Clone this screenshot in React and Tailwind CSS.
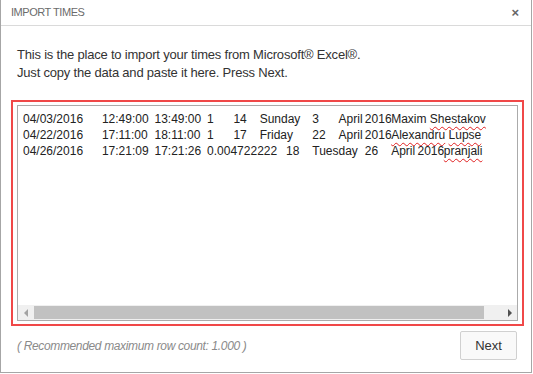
// cells: [text, width in tab stops]
const rows = [
  [['04/03/2016', 3], ['12:49:00', 2], ['13:49:00', 2], ['1', 1], ['14', 1], ['Sunday', 2], ['3', 1], ['April', 1], ['2016', 1], ['Maxim ', 0], ['Shestakov', -1]],
  [['04/22/2016', 3], ['17:11:00', 2], ['18:11:00', 2], ['1', 1], ['17', 1], ['Friday', 2], ['22', 1], ['April', 1], ['2016', 1], ['Alexandru', -1], [' ', 0], ['Lupse', -1]],
  [['04/26/2016', 3], ['17:21:09', 2], ['17:21:26', 2], ['0.004722222', 3], ['18', 1], ['Tuesday', 2], ['26', 1], ['April', 1], ['2016', 1], ['pranjali', -1]],
]

const widths = {
  1: 'inline-block w-[26.3px]',
  2: 'inline-block w-[52.6px]',
  3: 'inline-block w-[78.9px]',
}

function Cell({ text, w }) {
  if (w === -1) {
    return (
      <span className="underline decoration-wavy decoration-[#e02020] decoration-1 underline-offset-[3px]">
        {text}
      </span>
    )
  }
  if (w === 0) return <span>{text}</span>
  return <span className={widths[w]}>{text}</span>
}

export default function App() {
  return (
    <div className="w-[532px] h-[373px] bg-white border-x border-b border-[#a6a6a6] flex flex-col font-['Liberation_Sans',Arial,sans-serif]">
      <header className="h-[26px] shrink-0 border-b border-[#dadada] flex items-center justify-between pl-[10px] pr-[12px]">
        <span className="text-[11px] text-[#6b6b6b] tracking-[-0.45px]">IMPORT TIMES</span>
        <span className="text-[13px] font-bold text-[#666] leading-none">×</span>
      </header>

      <div className="pl-[16px] pt-[20px] text-[13px] leading-[18px] text-[#333] tracking-[-0.2px]">
        <p>This is the place to import your times from Microsoft® Excel®.</p>
        <p>Just copy the data and paste it here. Press Next.</p>
      </div>

      <div className="mt-[18px] ml-[10px] w-[513px] h-[226px] border-2 border-[#f04848] px-[4px] py-[3px]">
        <div className="h-full border border-[#ababab] flex flex-col">
          <div className="flex-1 pl-[5px] pt-[5px] whitespace-pre text-[12px] leading-[16px] text-[#222] overflow-hidden">
            {rows.map((r, i) => (
              <div key={i}>
                {r.map(([t, w], j) => (
                  <Cell key={j} text={t} w={w} />
                ))}
              </div>
            ))}
          </div>
          <div className="h-[15px] shrink-0 bg-[#f0f0f0] flex items-center">
            <div className="w-[15px] h-full flex items-center justify-center">
              <span className="w-0 h-0 border-y-[4px] border-y-transparent border-r-[4px] border-r-[#a3a3a3]" />
            </div>
            <div className="flex-1 h-full flex items-center pl-[1px] pr-[18px]">
              <div className="h-[13px] w-full bg-[#c1c1c1]" />
            </div>
            <div className="w-[15px] h-full flex items-center justify-center">
              <span className="w-0 h-0 border-y-[4px] border-y-transparent border-l-[4px] border-l-[#505050]" />
            </div>
          </div>
        </div>
      </div>

      <footer className="mt-[5px] flex items-center justify-between pl-[16px] pr-[14px]">
        <span className="text-[12px] italic text-[#8a8a8a] tracking-[-0.35px]">( Recommended maximum row count: 1.000 )</span>
        <button className="w-[57px] h-[29px] border border-[#d0d0d0] rounded-[2px] bg-[#f9f9f9] text-[13px] text-[#333]">
          Next
        </button>
      </footer>
    </div>
  )
}
